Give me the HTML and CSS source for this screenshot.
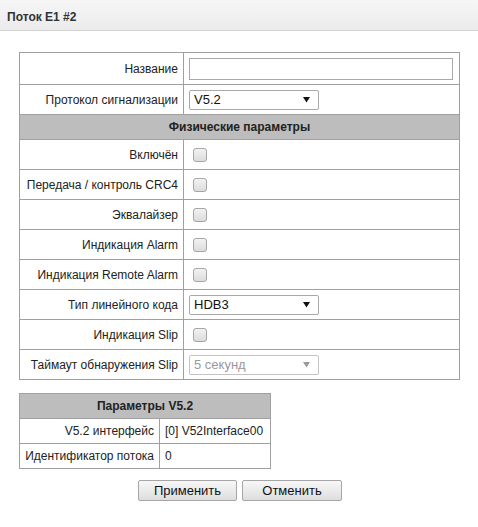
FILE: index.html
```html
<!DOCTYPE html>
<html lang="ru">
<head>
<meta charset="utf-8">
<title>Поток E1 #2</title>
<link rel="stylesheet" href="styles.css">
</head>
<body>
<div class="titlebar">Поток E1 #2</div>
<div class="content">
  <table class="grid main">
    <tr class="r-first">
      <td class="lbl">Название</td>
      <td class="val"><input class="text" type="text"></td>
    </tr>
    <tr>
      <td class="lbl">Протокол сигнализации</td>
      <td class="val"><div class="sel"><span>V5.2</span><svg width="7" height="7" viewBox="0 0 7 7"><path d="M0 1H7L3.5 6.5Z" fill="#111"/></svg></div></td>
    </tr>
    <tr class="sect"><td colspan="2">Физические параметры</td></tr>
    <tr><td class="lbl">Включён</td><td class="val"><span class="cb"></span></td></tr>
    <tr><td class="lbl">Передача / контроль CRC4</td><td class="val"><span class="cb"></span></td></tr>
    <tr><td class="lbl">Эквалайзер</td><td class="val"><span class="cb"></span></td></tr>
    <tr><td class="lbl">Индикация Alarm</td><td class="val"><span class="cb"></span></td></tr>
    <tr><td class="lbl">Индикация Remote Alarm</td><td class="val"><span class="cb"></span></td></tr>
    <tr>
      <td class="lbl">Тип линейного кода</td>
      <td class="val"><div class="sel"><span>HDB3</span><svg width="7" height="7" viewBox="0 0 7 7"><path d="M0 1H7L3.5 6.5Z" fill="#111"/></svg></div></td>
    </tr>
    <tr><td class="lbl">Индикация Slip</td><td class="val"><span class="cb"></span></td></tr>
    <tr>
      <td class="lbl">Таймаут обнаружения Slip</td>
      <td class="val"><div class="sel dis"><span>5 секунд</span><svg width="7" height="7" viewBox="0 0 7 7"><path d="M0 1H7L3.5 6.5Z" fill="#999"/></svg></div></td>
    </tr>
  </table>

  <table class="grid v52">
    <tr class="sect"><td colspan="2">Параметры V5.2</td></tr>
    <tr><td class="lbl">V5.2 интерфейс</td><td class="val">[0] V52Interface00</td></tr>
    <tr><td class="lbl">Идентификатор потока</td><td class="val">0</td></tr>
  </table>

  <div class="buttons">
    <button class="btn apply">Применить</button>
    <button class="btn cancel">Отменить</button>
  </div>
</div>
</body>
</html>
```

FILE: styles.css
```css
html, body {
  margin: 0;
  padding: 0;
  background: #fff;
}
body {
  font-family: Arial, "Liberation Sans", sans-serif;
  font-size: 12px;
  color: #222;
}
.titlebar {
  height: 31px;
  box-sizing: border-box;
  padding: 10px 0 0 7px;
  font-weight: bold;
  font-size: 12px;
  color: #333;
  background: linear-gradient(#f6f6f6, #ebebeb);
  border-bottom: 1px solid #d4d4d4;
}
.content {
  padding: 21px 0 0 19px;
}
.grid {
  border-collapse: collapse;
  border: 1px solid #a0a0a0;
}
.grid td {
  border: 1px solid #a0a0a0;
  padding: 0;
  vertical-align: middle;
}
.main {
  width: 441px;
}
.main td.lbl {
  width: 158px;
  text-align: right;
  padding-right: 5px;
  height: 29px;
}
.main td.val {
  padding-left: 5px;
}
.main tr.r-first td {
  height: 31px;
}
.sect td {
  background: #bdbdbd;
  text-align: center;
  font-weight: bold;
  color: #222;
  height: 24px;
}
.text {
  display: block;
  width: 264px;
  height: 22px;
  box-sizing: border-box;
  margin: 0;
  border: 1px solid #a9a9a9;
  padding: 1px 4px;
  font: 13px Arial, "Liberation Sans", sans-serif;
}
.sel {
  width: 130px;
  height: 20px;
  box-sizing: border-box;
  border: 1px solid #a9a9a9;
  border-radius: 2px;
  display: flex;
  align-items: center;
  justify-content: space-between;
  padding: 0 8px 0 4px;
  font-size: 13px;
  color: #111;
  background: #fff;
}
.sel.dis {
  color: #999;
  border-color: #c4c4c4;
}
.cb {
  display: block;
  width: 12px;
  height: 12px;
  margin-left: 4px;
  border: 1px solid #a6a6a6;
  border-radius: 3px;
  background: linear-gradient(#f2f2f2, #dcdcdc);
}
.v52 {
  margin-top: 13px;
  width: 252px;
}
.v52 .sect td {
  height: 24px;
}
.v52 td.lbl {
  width: 134px;
  text-align: right;
  padding-right: 5px;
  height: 24px;
}
.v52 td.val {
  padding-left: 5px;
}
.buttons {
  display: flex;
  gap: 5px;
  margin: 11px 0 0 119px;
}
.btn {
  height: 21px;
  width: 99px;
  box-sizing: border-box;
  border: 1px solid #a6a6a6;
  border-radius: 2px;
  background: linear-gradient(#f7f7f7, #dedede);
  font: 13px Arial, "Liberation Sans", sans-serif;
  color: #111;
  padding: 0;
}
.btn.cancel {
  width: 100px;
}
```
